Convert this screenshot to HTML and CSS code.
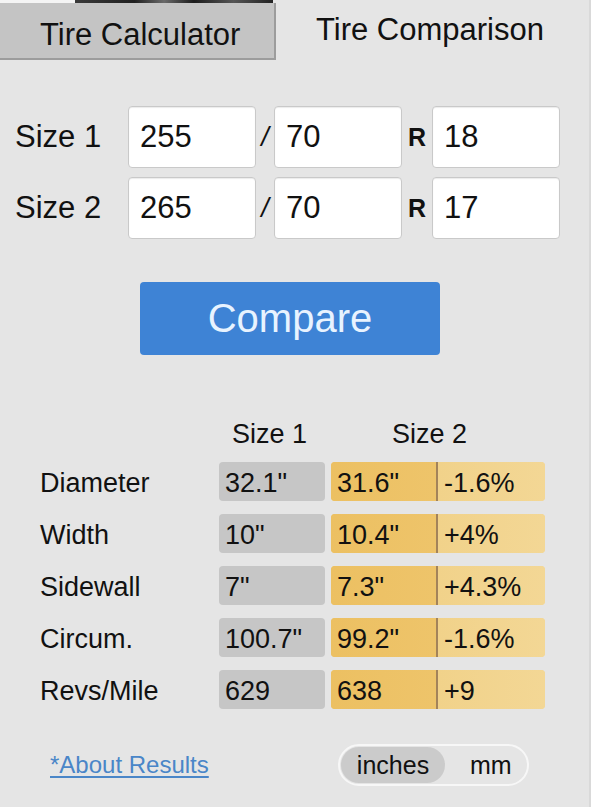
FILE: index.html
```html
<!DOCTYPE html>
<html>
<head>
<meta charset="utf-8">
<link rel="stylesheet" href="styles.css">
</head>
<body>
<div class="page">
  <div class="topstrip"><span class="strip-white"></span><span class="strip-img"></span></div>
  <div class="tabs">
    <div class="tab tab-inactive">Tire Calculator</div>
    <div class="tab tab-active">Tire Comparison</div>
  </div>

  <div class="sizes">
    <div class="size-row">
      <div class="size-label">Size 1</div>
      <div class="field">255</div>
      <div class="sep">/</div>
      <div class="field">70</div>
      <div class="sep sep-r">R</div>
      <div class="field">18</div>
    </div>
    <div class="size-row">
      <div class="size-label">Size 2</div>
      <div class="field">265</div>
      <div class="sep">/</div>
      <div class="field">70</div>
      <div class="sep sep-r">R</div>
      <div class="field">17</div>
    </div>
  </div>

  <div class="btn-wrap"><div class="compare">Compare</div></div>

  <div class="results">
    <div class="res-head">
      <div></div>
      <div class="h1">Size 1</div>
      <div class="h2">Size 2</div>
    </div>
    <div class="res-row">
      <div class="res-label">Diameter</div>
      <div class="cell grey">32.1"</div>
      <div class="cell orange"><span class="o-val">31.6"</span><span class="o-diff">-1.6%</span></div>
    </div>
    <div class="res-row">
      <div class="res-label">Width</div>
      <div class="cell grey">10"</div>
      <div class="cell orange"><span class="o-val">10.4"</span><span class="o-diff">+4%</span></div>
    </div>
    <div class="res-row">
      <div class="res-label">Sidewall</div>
      <div class="cell grey">7"</div>
      <div class="cell orange"><span class="o-val">7.3"</span><span class="o-diff">+4.3%</span></div>
    </div>
    <div class="res-row">
      <div class="res-label">Circum.</div>
      <div class="cell grey">100.7"</div>
      <div class="cell orange"><span class="o-val">99.2"</span><span class="o-diff">-1.6%</span></div>
    </div>
    <div class="res-row">
      <div class="res-label">Revs/Mile</div>
      <div class="cell grey">629</div>
      <div class="cell orange"><span class="o-val">638</span><span class="o-diff">+9</span></div>
    </div>
  </div>

  <div class="footer">
    <a class="about" href="#">*About Results</a>
    <div class="toggle">
      <span class="opt opt-on">inches</span>
      <span class="opt">mm</span>
    </div>
  </div>
</div>
</body>
</html>
```
FILE: styles.css
```css
html, body {
  margin: 0;
  padding: 0;
  background: #e5e5e5;
}
body {
  font-family: "Liberation Sans", Arial, sans-serif;
  color: #111;
}
.page {
  width: 589px;
  height: 807px;
  border-right: 2px solid #d9d9d9;
  overflow: hidden;
}
.topstrip {
  display: flex;
  height: 3px;
}
.strip-white {
  width: 75px;
  background: #f4f4f4;
}
.strip-img {
  width: 198px;
  background: linear-gradient(90deg, #3a3a3a, #202020 30%, #6a6a6a 45%, #1c1c1c 60%, #555 80%, #222);
}
.tabs {
  display: flex;
  height: 57px;
}
.tab {
  font-size: 31px;
  line-height: 36px;
}
.tab-inactive {
  box-sizing: border-box;
  width: 276px;
  height: 57px;
  background: #c4c4c4;
  border-right: 2px solid #9c9c9c;
  border-bottom: 2px solid #9c9c9c;
  padding: 14px 0 0 40px;
}
.tab-active {
  margin-left: 40px;
  padding-top: 9px;
}
.sizes {
  margin-top: 46px;
  display: flex;
  flex-direction: column;
  gap: 9px;
}
.size-row {
  display: flex;
  align-items: center;
  height: 62px;
}
.size-label {
  width: 113px;
  margin-left: 15px;
  font-size: 31px;
}
.field {
  box-sizing: border-box;
  width: 128px;
  height: 62px;
  background: #fff;
  border: 1px solid #c9c9c9;
  border-radius: 4px;
  box-shadow: inset 0 1px 1px rgba(0,0,0,0.08);
  font-size: 31px;
  line-height: 60px;
  padding-left: 11px;
}
.sep {
  width: 18px;
  text-align: center;
  font-size: 27px;
  font-style: italic;
}
.sep-r {
  width: 30px;
  font-style: normal;
  font-weight: bold;
  font-size: 25px;
}
.btn-wrap {
  margin-top: 43px;
  padding-left: 140px;
}
.compare {
  width: 300px;
  height: 73px;
  background: #3e83d5;
  border-radius: 4px;
  color: #e8f3ff;
  font-size: 40px;
  line-height: 73px;
  text-align: center;
}
.results {
  margin-top: 64px;
  display: flex;
  flex-direction: column;
  gap: 13px;
}
.res-head, .res-row {
  display: grid;
  grid-template-columns: 173px 106px 214px;
  column-gap: 6px;
  margin-left: 40px;
}
.res-head {
  font-size: 27px;
  line-height: 31px;
  margin-bottom: -1px;
}
.h1 { padding-left: 13px; }
.h2 { padding-left: 61px; }
.res-row {
  height: 39px;
  font-size: 27px;
  line-height: 39px;
}
.res-label {
  padding-top: 2px;
}
.cell {
  border-radius: 4px;
  padding-top: 2px;
  box-sizing: border-box;
  height: 39px;
}
.grey {
  background: #c6c6c6;
  padding-left: 6px;
}
.orange {
  display: flex;
  padding-top: 0;
  overflow: hidden;
  background: linear-gradient(90deg, #ecc163, #f2d491);
}
.o-val {
  box-sizing: border-box;
  width: 107px;
  padding: 2px 0 0 6px;
  background: linear-gradient(90deg, #ecc062, #eec46a);
  border-right: 2px solid #a3835a;
}
.o-diff {
  flex: 1;
  padding: 2px 0 0 6px;
  background: linear-gradient(90deg, #f1d28a, #f3d795);
}
.footer {
  margin-top: 35px;
  display: flex;
  align-items: center;
}
.about {
  margin-left: 50px;
  font-size: 24px;
  color: #4a86c8;
  text-decoration: underline;
  text-underline-offset: 3px;
  width: 288px;
}
.toggle {
  box-sizing: border-box;
  width: 191px;
  height: 42px;
  border: 2px solid #f7f7f7;
  border-radius: 21px;
  display: flex;
  align-items: stretch;
  padding: 1px;
}
.opt {
  font-size: 25px;
  line-height: 36px;
  color: #111;
}
.opt-on {
  width: 104px;
  background: #cbcbcb;
  border-radius: 19px;
  text-align: center;
}
.opt + .opt {
  margin-left: 25px;
}
```
